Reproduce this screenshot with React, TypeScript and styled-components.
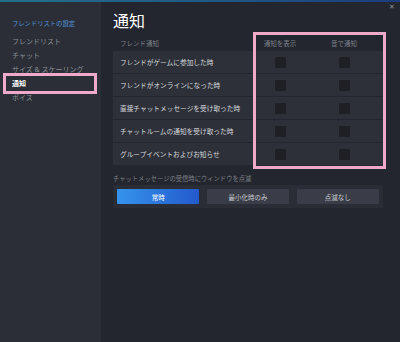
import React from 'react';
import styled, { createGlobalStyle } from 'styled-components';

const GlobalStyle = createGlobalStyle`
  html, body {
    margin: 0;
    padding: 0;
    background: #23262e;
  }
  body {
    font-family: "Noto Sans", "Noto Sans CJK JP", sans-serif;
  }
`;

const Window = styled.div`
  width: 400px;
  height: 342px;
  display: flex;
  flex-direction: column;
  background: #23262e;
  position: relative;
  overflow: hidden;
`;

const AccentBar = styled.div`
  height: 2px;
  flex: none;
  background: linear-gradient(to right, #23708c 0%, #1f5a86 50%, #1c3c7c 100%);
`;

const Body = styled.div`
  flex: 1;
  display: flex;
`;

const CloseButton = styled.div`
  position: absolute;
  top: 2px;
  right: 5px;
  color: #8a8e96;
  font-size: 7px;
  line-height: 9px;
`;

// left side navigation
const Sidebar = styled.nav`
  width: 101px;
  flex: none;
  background: #2b2e36;
  padding-top: 16px;
  display: flex;
  flex-direction: column;
`;

const SidebarTitle = styled.div`
  color: #4f95da;
  font-size: 6.3px;
  line-height: 12px;
  padding-left: 12px;
  margin-bottom: 5px;
  white-space: nowrap;
`;

type NavItemProps = {
  $active?: boolean;
};

const NavItem = styled.div<NavItemProps>`
  position: relative;
  padding-left: 12px;
  font-size: 7px;
  line-height: 14px;
  white-space: nowrap;
  color: ${props => (props.$active ? '#ffffff' : '#8a8e97')};
  font-weight: ${props => (props.$active ? 700 : 400)};

  ${props =>
    props.$active &&
    `
    &::after {
      content: '';
      position: absolute;
      left: 3px;
      right: 4px;
      top: -4px;
      bottom: -3px;
      border: 3px solid #eeaac8;
    }
  `}
`;

const Main = styled.main`
  flex: 1;
  padding: 9px 17px 0 12px;
  display: flex;
  flex-direction: column;
`;

const Title = styled.h1`
  margin: 0;
  font-size: 16px;
  line-height: 20px;
  font-weight: 400;
  color: #ffffff;
`;

const Table = styled.div`
  position: relative;
  margin-top: 5px;
  display: flex;
  flex-direction: column;
  gap: 1px;
`;

const TableRow = styled.div`
  display: grid;
  grid-template-columns: 1fr 64px 64px;
  align-items: center;
  padding: 0 7px 0 7px;
`;

const HeaderRow = styled(TableRow)`
  height: 14px;
  font-size: 6.5px;
  color: #7c8089;
`;

const SettingRow = styled(TableRow)`
  height: 22px;
  background: #2d3039;
  font-size: 6.7px;
  color: #d8dade;
`;

const ColHead = styled.div`
  text-align: center;
  white-space: nowrap;
`;

const Label = styled.div`
  white-space: nowrap;
`;

const Cell = styled.div`
  display: flex;
  justify-content: center;
`;

const Checkbox = styled.div`
  width: 11px;
  height: 11px;
  background: #1e2026;
  border-radius: 1px;
`;

const Highlight = styled.div`
  position: absolute;
  left: 140px;
  top: -4px;
  width: 133px;
  height: 137px;
  box-sizing: border-box;
  border: 3px solid #eeaac8;
  pointer-events: none;
`;

const SectionLabel = styled.div`
  margin-top: 8px;
  font-size: 6.3px;
  line-height: 12px;
  color: #7c8089;
  white-space: nowrap;
`;

const ButtonGroup = styled.div`
  display: grid;
  grid-template-columns: repeat(3, 1fr);
  gap: 7.5px;
  padding: 4px;
  background: #2a2d35;
  width: 270px;
  box-sizing: border-box;
`;

type OptionButtonProps = {
  $selected?: boolean;
};

const OptionButton = styled.div<OptionButtonProps>`
  height: 15px;
  display: flex;
  align-items: center;
  justify-content: center;
  font-size: 6.5px;
  color: ${props => (props.$selected ? '#ffffff' : '#c9cbd0')};
  background: ${props =>
    props.$selected
      ? 'linear-gradient(to right, #3594ec, #2359cc)'
      : '#3a3d47'};
  border-radius: 1px;
`;

const navItems = ['フレンドリスト', 'チャット', 'サイズ & スケーリング', '通知', 'ボイス'];

const settings = [
  'フレンドがゲームに参加した時',
  'フレンドがオンラインになった時',
  '直接チャットメッセージを受け取った時',
  'チャットルームの通知を受け取った時',
  'グループイベントおよびお知らせ',
];

const flashOptions = ['常時', '最小化時のみ', '点滅なし'];

const App: React.FC = () => {
  return (
    <>
      <GlobalStyle />
      <Window>
        <AccentBar />
        <CloseButton>✕</CloseButton>
        <Body>
          <Sidebar>
            <SidebarTitle>フレンドリストの設定</SidebarTitle>
            {navItems.map(item => (
              <NavItem key={item} $active={item === '通知'}>
                {item}
              </NavItem>
            ))}
          </Sidebar>
          <Main>
            <Title>通知</Title>
            <Table>
              <HeaderRow>
                <Label>フレンド通知</Label>
                <ColHead>通知を表示</ColHead>
                <ColHead>音で通知</ColHead>
              </HeaderRow>
              {settings.map(s => (
                <SettingRow key={s}>
                  <Label>{s}</Label>
                  <Cell>
                    <Checkbox />
                  </Cell>
                  <Cell>
                    <Checkbox />
                  </Cell>
                </SettingRow>
              ))}
              <Highlight />
            </Table>
            <SectionLabel>チャットメッセージの受信時にウィンドウを点滅</SectionLabel>
            <ButtonGroup>
              {flashOptions.map(o => (
                <OptionButton key={o} $selected={o === '常時'}>
                  {o}
                </OptionButton>
              ))}
            </ButtonGroup>
          </Main>
        </Body>
      </Window>
    </>
  );
};

export default App;
